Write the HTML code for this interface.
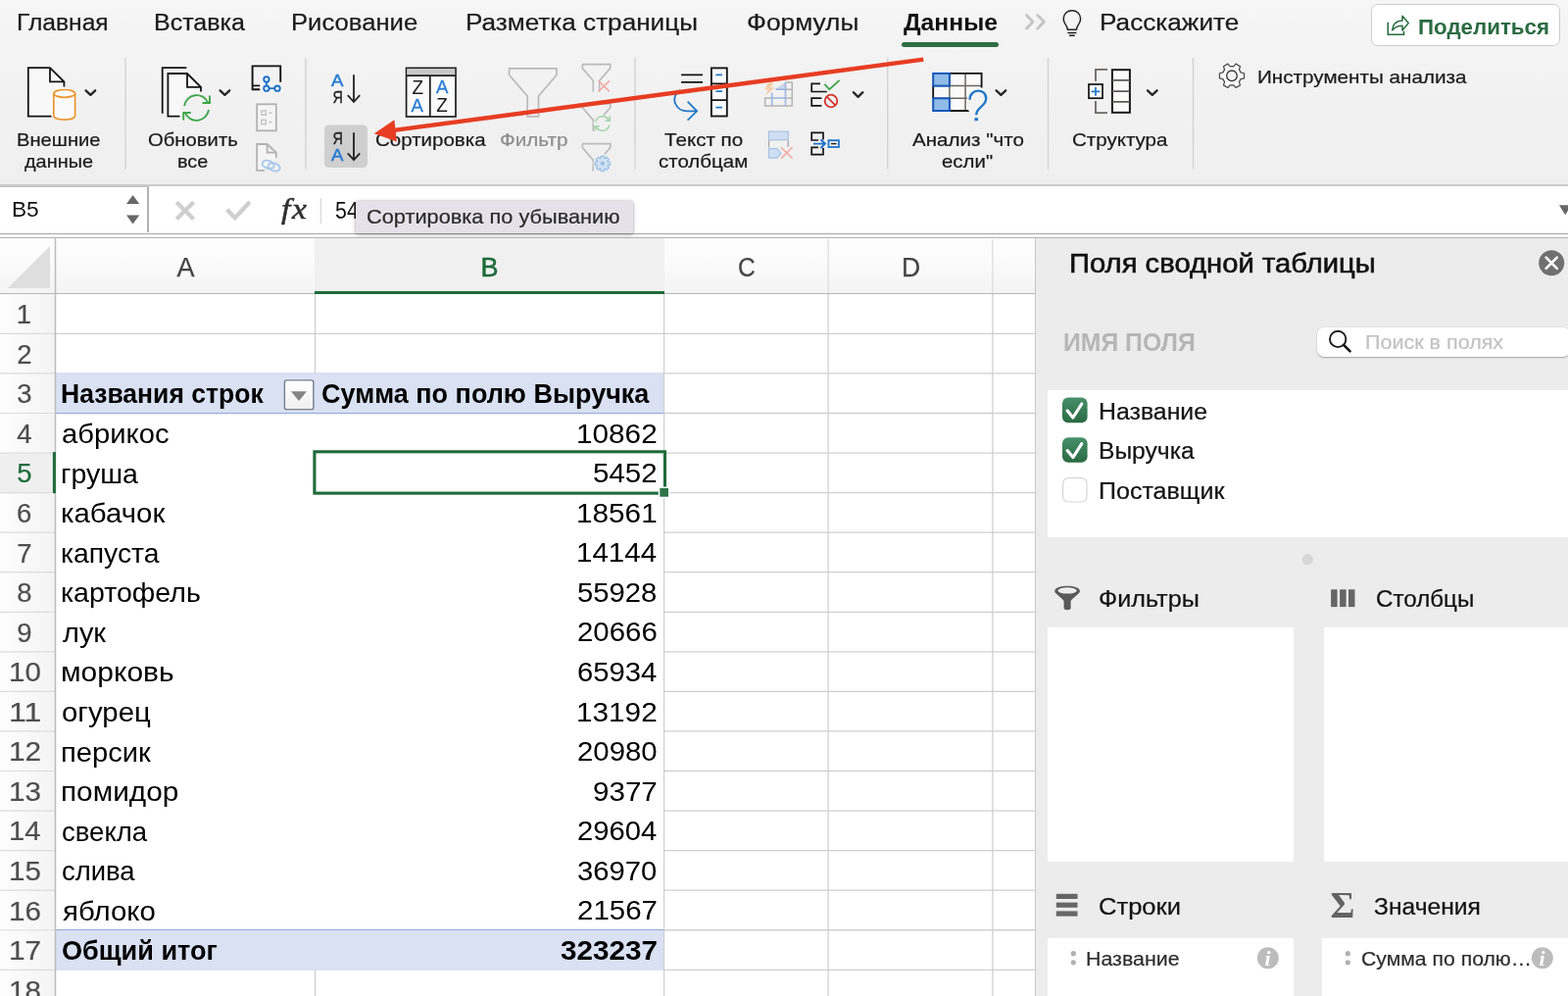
<!DOCTYPE html><html lang="ru"><head><meta charset="utf-8"><title>Excel</title><style>

*{box-sizing:border-box;margin:0;padding:0}
html,body{width:1600px;height:1016px;overflow:hidden;background:#fff}
body{font-family:"Liberation Sans",sans-serif;color:#1a1a1a;position:relative}
.t{position:absolute;white-space:nowrap;display:block;transform-origin:0 0}
.a{position:absolute;display:block}
#w{position:absolute;left:0;top:0;width:1600px;height:1016px;will-change:transform;overflow:hidden}
svg.ov{position:absolute;left:0;top:0;width:1600px;height:1016px;pointer-events:none;overflow:visible}
svg text{font-family:"Liberation Sans",sans-serif}

</style></head><body><div id="w">
<div class="a" style="left:0;top:242px;width:1057px;height:774px;background:#fff;overflow:hidden">
<div class="a" style="left:0;top:0;width:1057px;height:58px;background:linear-gradient(#fcfcfc 0,#fcfcfc 20px,#f4f4f4);border-bottom:1.6px solid #b6b6b6"></div>
<div class="a" style="left:321px;top:1px;width:357px;height:57px;background:#f0f0f0;border-bottom:3.3px solid #1e6b3a"></div>
<div class="a" style="left:0;top:58px;width:56px;height:716px;background:linear-gradient(90deg,#fdfdfd,#f4f4f4)"></div>
<div class="a" style="left:0;top:220.5px;width:56px;height:40.6px;background:#efefef"></div>
<div class="a" style="left:8px;top:9.2px;width:0;height:0;border-left:43.6px solid transparent;border-bottom:43.6px solid #dedede"></div>
<div class="a" style="left:57px;top:138.2px;width:620.6px;height:42px;background:#d9e1f2;border-bottom:1.8px solid #8ea9db"></div>
<div class="a" style="left:57px;top:706.3px;width:620.6px;height:41.4px;background:#d9e1f2;border-top:1.5px solid #8ea9db"></div>
</div>
<svg class="ov" viewBox="0 0 1600 1016"><line x1="0" y1="340.36" x2="56" y2="340.36" stroke="#dcdcdc" stroke-width="1.2"/><line x1="57" y1="340.36" x2="1057" y2="340.36" stroke="#cfcfcf" stroke-width="1.3"/><line x1="0" y1="380.92" x2="56" y2="380.92" stroke="#dcdcdc" stroke-width="1.2"/><line x1="678" y1="380.92" x2="1057" y2="380.92" stroke="#cfcfcf" stroke-width="1.3"/><line x1="0" y1="421.48" x2="56" y2="421.48" stroke="#dcdcdc" stroke-width="1.2"/><line x1="678" y1="421.48" x2="1057" y2="421.48" stroke="#cfcfcf" stroke-width="1.3"/><line x1="0" y1="462.04" x2="56" y2="462.04" stroke="#dcdcdc" stroke-width="1.2"/><line x1="678" y1="462.04" x2="1057" y2="462.04" stroke="#cfcfcf" stroke-width="1.3"/><line x1="0" y1="502.60" x2="56" y2="502.60" stroke="#dcdcdc" stroke-width="1.2"/><line x1="678" y1="502.60" x2="1057" y2="502.60" stroke="#cfcfcf" stroke-width="1.3"/><line x1="0" y1="543.16" x2="56" y2="543.16" stroke="#dcdcdc" stroke-width="1.2"/><line x1="678" y1="543.16" x2="1057" y2="543.16" stroke="#cfcfcf" stroke-width="1.3"/><line x1="0" y1="583.72" x2="56" y2="583.72" stroke="#dcdcdc" stroke-width="1.2"/><line x1="678" y1="583.72" x2="1057" y2="583.72" stroke="#cfcfcf" stroke-width="1.3"/><line x1="0" y1="624.28" x2="56" y2="624.28" stroke="#dcdcdc" stroke-width="1.2"/><line x1="678" y1="624.28" x2="1057" y2="624.28" stroke="#cfcfcf" stroke-width="1.3"/><line x1="0" y1="664.84" x2="56" y2="664.84" stroke="#dcdcdc" stroke-width="1.2"/><line x1="678" y1="664.84" x2="1057" y2="664.84" stroke="#cfcfcf" stroke-width="1.3"/><line x1="0" y1="705.40" x2="56" y2="705.40" stroke="#dcdcdc" stroke-width="1.2"/><line x1="678" y1="705.40" x2="1057" y2="705.40" stroke="#cfcfcf" stroke-width="1.3"/><line x1="0" y1="745.96" x2="56" y2="745.96" stroke="#dcdcdc" stroke-width="1.2"/><line x1="678" y1="745.96" x2="1057" y2="745.96" stroke="#cfcfcf" stroke-width="1.3"/><line x1="0" y1="786.52" x2="56" y2="786.52" stroke="#dcdcdc" stroke-width="1.2"/><line x1="678" y1="786.52" x2="1057" y2="786.52" stroke="#cfcfcf" stroke-width="1.3"/><line x1="0" y1="827.08" x2="56" y2="827.08" stroke="#dcdcdc" stroke-width="1.2"/><line x1="678" y1="827.08" x2="1057" y2="827.08" stroke="#cfcfcf" stroke-width="1.3"/><line x1="0" y1="867.64" x2="56" y2="867.64" stroke="#dcdcdc" stroke-width="1.2"/><line x1="678" y1="867.64" x2="1057" y2="867.64" stroke="#cfcfcf" stroke-width="1.3"/><line x1="0" y1="908.20" x2="56" y2="908.20" stroke="#dcdcdc" stroke-width="1.2"/><line x1="678" y1="908.20" x2="1057" y2="908.20" stroke="#cfcfcf" stroke-width="1.3"/><line x1="0" y1="948.76" x2="56" y2="948.76" stroke="#dcdcdc" stroke-width="1.2"/><line x1="678" y1="948.76" x2="1057" y2="948.76" stroke="#cfcfcf" stroke-width="1.3"/><line x1="0" y1="989.32" x2="56" y2="989.32" stroke="#dcdcdc" stroke-width="1.2"/><line x1="678" y1="989.32" x2="1057" y2="989.32" stroke="#cfcfcf" stroke-width="1.3"/><line x1="56.5" y1="243" x2="56.5" y2="1016" stroke="#bcbcbc" stroke-width="1.5"/><rect x="53.9" y="461.1" width="3" height="42" fill="#1e6b3a"/><line x1="321.5" y1="300" x2="321.5" y2="380.9" stroke="#cfcfcf" stroke-width="1.3"/><line x1="321.5" y1="989.3" x2="321.5" y2="1016" stroke="#cfcfcf" stroke-width="1.3"/><line x1="677.6" y1="300" x2="677.6" y2="1016" stroke="#cfcfcf" stroke-width="1.3"/><line x1="845.1" y1="300" x2="845.1" y2="1016" stroke="#cfcfcf" stroke-width="1.3"/><line x1="1012.9" y1="300" x2="1012.9" y2="1016" stroke="#cfcfcf" stroke-width="1.3"/><line x1="845.1" y1="244" x2="845.1" y2="299" stroke="#dcdcdc" stroke-width="1.2"/><line x1="1012.9" y1="244" x2="1012.9" y2="299" stroke="#dcdcdc" stroke-width="1.2"/><rect x="320.9" y="460.8" width="357.6" height="42.3" fill="none" stroke="#1e6b3a" stroke-width="3.1"/><rect x="671.8" y="496.6" width="11.4" height="11.4" fill="#fff"/><rect x="673.3" y="498" width="8.7" height="8.7" fill="#2d7247"/><defs><linearGradient id="gbtn" x1="0" y1="0" x2="0" y2="1"><stop offset="0" stop-color="#ffffff"/><stop offset="1" stop-color="#f0f0f0"/></linearGradient></defs><rect x="290.4" y="387.9" width="29.5" height="29.7" rx="2.2" fill="url(#gbtn)" stroke="#767d8c" stroke-width="1.4"/><path d="M297 399.3 L313 399.3 L305 409 Z" fill="#848484"/></svg>
<span class="t" style="left:180.52px;top:258px;font-size:27px;line-height:30px;color:#444;-webkit-text-stroke:0.25px #444;">A</span>
<span class="t" style="left:490.62px;top:258px;font-size:27px;line-height:30px;color:#1e6b3a;-webkit-text-stroke:0.5px #1e6b3a;">B</span>
<span class="t" style="left:753.37px;top:258px;font-size:27px;line-height:30px;transform:scaleX(0.9099);color:#444;-webkit-text-stroke:0.25px #444;">C</span>
<span class="t" style="left:919.78px;top:258px;font-size:27px;line-height:30px;transform:scaleX(0.9835);color:#444;-webkit-text-stroke:0.25px #444;">D</span>
<span class="t" style="left:16.79px;top:305px;font-size:27.5px;line-height:31px;color:#4e4e4e;-webkit-text-stroke:0.2px #4e4e4e;">1</span>
<span class="t" style="left:17.13px;top:346px;font-size:27.5px;line-height:31px;color:#4e4e4e;-webkit-text-stroke:0.2px #4e4e4e;">2</span>
<span class="t" style="left:17.24px;top:386px;font-size:27.5px;line-height:31px;color:#4e4e4e;-webkit-text-stroke:0.2px #4e4e4e;">3</span>
<span class="t" style="left:17.24px;top:427px;font-size:27.5px;line-height:31px;color:#4e4e4e;-webkit-text-stroke:0.2px #4e4e4e;">4</span>
<span class="t" style="left:17.17px;top:467px;font-size:27.5px;line-height:31px;color:#1e6b3a;-webkit-text-stroke:0.2px #1e6b3a;">5</span>
<span class="t" style="left:17.07px;top:508px;font-size:27.5px;line-height:31px;color:#4e4e4e;-webkit-text-stroke:0.2px #4e4e4e;">6</span>
<span class="t" style="left:17.13px;top:549px;font-size:27.5px;line-height:31px;color:#4e4e4e;-webkit-text-stroke:0.2px #4e4e4e;">7</span>
<span class="t" style="left:17.13px;top:589px;font-size:27.5px;line-height:31px;color:#4e4e4e;-webkit-text-stroke:0.2px #4e4e4e;">8</span>
<span class="t" style="left:17.17px;top:630px;font-size:27.5px;line-height:31px;color:#4e4e4e;-webkit-text-stroke:0.2px #4e4e4e;">9</span>
<span class="t" style="left:9.19px;top:670px;font-size:27.5px;line-height:31px;transform:scaleX(1.0718);color:#4e4e4e;-webkit-text-stroke:0.2px #4e4e4e;">10</span>
<span class="t" style="left:8.99px;top:711px;font-size:27.5px;line-height:31px;transform:scaleX(1.1684);color:#4e4e4e;-webkit-text-stroke:0.2px #4e4e4e;">11</span>
<span class="t" style="left:9.17px;top:751px;font-size:27.5px;line-height:31px;transform:scaleX(1.0826);color:#4e4e4e;-webkit-text-stroke:0.2px #4e4e4e;">12</span>
<span class="t" style="left:9.18px;top:792px;font-size:27.5px;line-height:31px;transform:scaleX(1.0772);color:#4e4e4e;-webkit-text-stroke:0.2px #4e4e4e;">13</span>
<span class="t" style="left:9.21px;top:832px;font-size:27.5px;line-height:31px;transform:scaleX(1.0611);color:#4e4e4e;-webkit-text-stroke:0.2px #4e4e4e;">14</span>
<span class="t" style="left:9.18px;top:873px;font-size:27.5px;line-height:31px;transform:scaleX(1.0745);color:#4e4e4e;-webkit-text-stroke:0.2px #4e4e4e;">15</span>
<span class="t" style="left:9.18px;top:914px;font-size:27.5px;line-height:31px;transform:scaleX(1.0772);color:#4e4e4e;-webkit-text-stroke:0.2px #4e4e4e;">16</span>
<span class="t" style="left:9.17px;top:954px;font-size:27.5px;line-height:31px;transform:scaleX(1.0826);color:#4e4e4e;-webkit-text-stroke:0.2px #4e4e4e;">17</span>
<span class="t" style="left:9.18px;top:995px;font-size:27.5px;line-height:31px;transform:scaleX(1.0745);color:#4e4e4e;-webkit-text-stroke:0.2px #4e4e4e;">18</span>
<span class="t" style="left:62.76px;top:427px;font-size:28px;line-height:31px;transform:scaleX(1.0433);color:#000;">абрикос</span>
<span class="t" style="left:62.08px;top:468px;font-size:28px;line-height:31px;transform:scaleX(1.0176);color:#000;">груша</span>
<span class="t" style="left:62.09px;top:508px;font-size:28px;line-height:31px;transform:scaleX(1.0498);color:#000;">кабачок</span>
<span class="t" style="left:62.16px;top:549px;font-size:28px;line-height:31px;transform:scaleX(1.0115);color:#000;">капуста</span>
<span class="t" style="left:62.14px;top:589px;font-size:28px;line-height:31px;transform:scaleX(1.0195);color:#000;">картофель</span>
<span class="t" style="left:63.86px;top:630px;font-size:28px;line-height:31px;transform:scaleX(1.0338);color:#000;">лук</span>
<span class="t" style="left:61.98px;top:670px;font-size:28px;line-height:31px;transform:scaleX(1.0702);color:#000;">морковь</span>
<span class="t" style="left:62.83px;top:711px;font-size:28px;line-height:31px;transform:scaleX(1.0482);color:#000;">огурец</span>
<span class="t" style="left:62.03px;top:752px;font-size:28px;line-height:31px;transform:scaleX(1.0411);color:#000;">персик</span>
<span class="t" style="left:61.99px;top:792px;font-size:28px;line-height:31px;transform:scaleX(1.0632);color:#000;">помидор</span>
<span class="t" style="left:62.83px;top:833px;font-size:28px;line-height:31px;transform:scaleX(0.9836);color:#000;">свекла</span>
<span class="t" style="left:62.83px;top:873px;font-size:28px;line-height:31px;transform:scaleX(0.9791);color:#000;">слива</span>
<span class="t" style="left:63.78px;top:914px;font-size:28px;line-height:31px;transform:scaleX(1.0509);color:#000;">яблоко</span>
<span class="t" style="left:62.28px;top:386px;font-size:28px;line-height:31px;transform:scaleX(0.9471);font-weight:700;color:#000;">Названия строк</span>
<span class="t" style="left:328.42px;top:386px;font-size:28px;line-height:31px;transform:scaleX(0.9644);font-weight:700;color:#000;">Сумма по полю Выручка</span>
<span class="t" style="left:62.92px;top:954px;font-size:28px;line-height:31px;transform:scaleX(0.9667);font-weight:700;color:#000;">Общий итог</span>
<span class="t" style="left:588.07px;top:427px;font-size:28px;line-height:31px;transform:scaleX(1.0617);color:#000;">10862</span>
<span class="t" style="left:605.12px;top:467px;font-size:28px;line-height:31px;transform:scaleX(1.0539);color:#000;">5452</span>
<span class="t" style="left:588.07px;top:508px;font-size:28px;line-height:31px;transform:scaleX(1.0617);color:#000;">18561</span>
<span class="t" style="left:588.09px;top:548px;font-size:28px;line-height:31px;transform:scaleX(1.0538);color:#000;">14144</span>
<span class="t" style="left:589.13px;top:589px;font-size:28px;line-height:31px;transform:scaleX(1.0450);color:#000;">55928</span>
<span class="t" style="left:588.83px;top:629px;font-size:28px;line-height:31px;transform:scaleX(1.0498);color:#000;">20666</span>
<span class="t" style="left:588.84px;top:670px;font-size:28px;line-height:31px;transform:scaleX(1.0440);color:#000;">65934</span>
<span class="t" style="left:588.07px;top:711px;font-size:28px;line-height:31px;transform:scaleX(1.0617);color:#000;">13192</span>
<span class="t" style="left:588.83px;top:751px;font-size:28px;line-height:31px;transform:scaleX(1.0479);color:#000;">20980</span>
<span class="t" style="left:604.97px;top:792px;font-size:28px;line-height:31px;transform:scaleX(1.0563);color:#000;">9377</span>
<span class="t" style="left:588.84px;top:832px;font-size:28px;line-height:31px;transform:scaleX(1.0440);color:#000;">29604</span>
<span class="t" style="left:589.20px;top:873px;font-size:28px;line-height:31px;transform:scaleX(1.0430);color:#000;">36970</span>
<span class="t" style="left:588.83px;top:913px;font-size:28px;line-height:31px;transform:scaleX(1.0518);color:#000;">21567</span>
<span class="t" style="left:571.63px;top:954px;font-size:28px;line-height:31px;transform:scaleX(1.0594);font-weight:700;color:#000;">323237</span>
<div class="a" style="left:1056px;top:242px;width:544px;height:774px;background:#ececec;border-left:1.5px solid #c6c6c6"></div>
<div class="a" style="left:1068.7px;top:398px;width:531.3px;height:149.5px;background:#fff;"></div>
<div class="a" style="left:1068.7px;top:639.7px;width:251.5px;height:239.6px;background:#fff;"></div>
<div class="a" style="left:1350.7px;top:639.7px;width:249.3px;height:239.6px;background:#fff;"></div>
<div class="a" style="left:1068.7px;top:957.3px;width:251.5px;height:60px;background:#fff;"></div>
<div class="a" style="left:1348.8px;top:957.3px;width:251.2px;height:60px;background:#fff;"></div>
<div class="a" style="left:1343.5px;top:334px;width:258px;height:30px;background:#fff;border-radius:7px;box-shadow:0 1px 1.5px rgba(0,0,0,.28),0 0 0 0.5px rgba(0,0,0,.06)"></div>
<span class="t" style="left:1091.46px;top:254px;font-size:27px;line-height:30px;transform:scaleX(1.0825);color:#111;-webkit-text-stroke:0.6px #111;">Поля сводной таблицы</span>
<span class="t" style="left:1084.69px;top:335px;font-size:25px;line-height:28px;transform:scaleX(0.9906);font-weight:700;color:#b6b6b6;">ИМЯ ПОЛЯ</span>
<span class="t" style="left:1392.58px;top:338px;font-size:19.5px;line-height:22px;transform:scaleX(1.1033);color:#c2c2c2;-webkit-text-stroke:0.22px #c2c2c2;">Поиск в полях</span>
<span class="t" style="left:1120.71px;top:407px;font-size:23.5px;line-height:26px;transform:scaleX(1.0577);color:#111;-webkit-text-stroke:0.22px #111;">Название</span>
<span class="t" style="left:1120.73px;top:447px;font-size:23.5px;line-height:26px;transform:scaleX(1.0475);color:#111;-webkit-text-stroke:0.22px #111;">Выручка</span>
<span class="t" style="left:1120.70px;top:488px;font-size:23.5px;line-height:26px;transform:scaleX(1.0654);color:#111;-webkit-text-stroke:0.22px #111;">Поставщик</span>
<span class="t" style="left:1121.25px;top:598px;font-size:23.5px;line-height:26px;transform:scaleX(1.0723);color:#111;-webkit-text-stroke:0.22px #111;">Фильтры</span>
<span class="t" style="left:1404.09px;top:598px;font-size:23.5px;line-height:26px;transform:scaleX(1.0278);color:#111;-webkit-text-stroke:0.22px #111;">Столбцы</span>
<span class="t" style="left:1121.42px;top:912px;font-size:23.5px;line-height:26px;transform:scaleX(1.0873);color:#111;-webkit-text-stroke:0.22px #111;">Строки</span>
<span class="t" style="left:1402.10px;top:912px;font-size:23.5px;line-height:26px;transform:scaleX(1.0487);color:#111;-webkit-text-stroke:0.22px #111;">Значения</span>
<span class="t" style="left:1108.19px;top:967px;font-size:20px;line-height:22px;transform:scaleX(1.0702);color:#2c2c2c;-webkit-text-stroke:0.2px #2c2c2c;">Название</span>
<span class="t" style="left:1388.54px;top:967px;font-size:20px;line-height:22px;transform:scaleX(1.0599);color:#2c2c2c;-webkit-text-stroke:0.2px #2c2c2c;">Сумма по полю…</span>
<svg class="ov" viewBox="0 0 1600 1016"><defs><linearGradient id="gck" x1="0" y1="0" x2="0" y2="1"><stop offset="0" stop-color="#46906a"/><stop offset="1" stop-color="#2a6a43"/></linearGradient></defs><circle cx="1583.2" cy="268.2" r="13" fill="#707070"/><path d="M1577.6 262.6 L1588.8 273.8 M1588.8 262.6 L1577.6 273.8" stroke="#fff" stroke-width="2.6" stroke-linecap="round"/><circle cx="1365.2" cy="345.9" r="8.2" fill="none" stroke="#1a1a1a" stroke-width="1.9"/><path d="M1371.2 352 L1377.6 358.4" stroke="#1a1a1a" stroke-width="2.6" stroke-linecap="round"/><rect x="1084" y="405.6" width="25.6" height="25.6" rx="6" fill="url(#gck)"/><path d="M1089.2 419.0 L1094.9 426.0 L1103.8 412.0" fill="none" stroke="#fff" stroke-width="3.1" stroke-linecap="round" stroke-linejoin="round"/><rect x="1084" y="446.2" width="25.6" height="25.6" rx="6" fill="url(#gck)"/><path d="M1089.2 459.59999999999997 L1094.9 466.59999999999997 L1103.8 452.59999999999997" fill="none" stroke="#fff" stroke-width="3.1" stroke-linecap="round" stroke-linejoin="round"/><rect x="1084.6" y="487.6" width="24.4" height="24.4" rx="5.5" fill="#fff" stroke="#d6d6d6" stroke-width="1.2"/><circle cx="1334.3" cy="570.7" r="5.6" fill="#d6d6d6"/><path d="M1076.2 602.9 C1076.2 595.9 1102 595.9 1102 602.9 C1102 605.9 1093 610.4 1092.6 613.4 L1092.6 620.3 C1092.6 622.8 1085.6 622.8 1085.6 620.3 L1085.6 613.4 C1085.2 610.4 1076.2 605.9 1076.2 602.9 Z" fill="#5a5a5a"/><ellipse cx="1089.1" cy="602.4" rx="9.6" ry="3.2" fill="#ececec"/><rect x="1358.1" y="601.3" width="6.5" height="17.8" fill="#666"/><rect x="1367.1" y="601.3" width="6.5" height="17.8" fill="#666"/><rect x="1376" y="601.3" width="6.5" height="17.8" fill="#666"/><rect x="1077.8" y="911.8" width="21.7" height="5.2" fill="#666"/><rect x="1077.8" y="920.6" width="21.7" height="5.2" fill="#666"/><rect x="1077.8" y="929.4" width="21.7" height="5.2" fill="#666"/><text x="1357.4" y="935.6" style="font-family:'Liberation Serif',serif" font-weight="bold" font-size="38" fill="#646464">Σ</text><circle cx="1095.3" cy="972.7" r="2.6" fill="#b0b0b0"/><circle cx="1095.3" cy="981.8" r="2.6" fill="#b0b0b0"/><circle cx="1375.3" cy="972.7" r="2.6" fill="#b0b0b0"/><circle cx="1375.3" cy="981.8" r="2.6" fill="#b0b0b0"/><circle cx="1293.8" cy="977.3" r="11" fill="#bcbcbc"/><text x="1290.3999999999999" y="984.6" style="font-family:'Liberation Serif',serif" font-style="italic" font-weight="bold" font-size="22" fill="#fff">i</text><circle cx="1573.8" cy="977.3" r="11" fill="#bcbcbc"/><text x="1570.3999999999999" y="984.6" style="font-family:'Liberation Serif',serif" font-style="italic" font-weight="bold" font-size="22" fill="#fff">i</text></svg>
<div class="a" style="left:0;top:0;width:1600px;height:189px;background:linear-gradient(#f6f6f6 0,#f3f3f3 50px,#efefef 189px)"></div>
<div class="a" style="left:0;top:188px;width:1600px;height:2px;background:#c9c9c9"></div>
<div class="a" style="left:0;top:190px;width:1600px;height:48px;background:#fff"></div>
<div class="a" style="left:0;top:190px;width:152px;height:47px;border-top:1.5px solid #c4c4c4;border-right:2px solid #b2b2b2;background:#fff"></div>
<div class="a" style="left:0;top:237.9px;width:1600px;height:1.7px;background:#a8a8a8"></div>
<div class="a" style="left:0;top:239.2px;width:1600px;height:2.6px;background:#f6f6f6"></div>
<div class="a" style="left:0;top:241.7px;width:1600px;height:1.4px;background:#b4b4b4"></div>
<div class="a" style="left:1399.4px;top:4.3px;width:192.8px;height:43px;background:#fff;border:1.5px solid #cdcdcd;border-radius:7px"></div>
<div class="a" style="left:920px;top:42.6px;width:98.5px;height:5.2px;border-radius:3px;background:#2f6f45"></div>
<span class="t" style="left:16.83px;top:10px;font-size:23px;line-height:26px;transform:scaleX(1.0699);-webkit-text-stroke:0.22px #1a1a1a;">Главная</span>
<span class="t" style="left:157.30px;top:10px;font-size:23px;line-height:26px;transform:scaleX(1.0877);-webkit-text-stroke:0.22px #1a1a1a;">Вставка</span>
<span class="t" style="left:297.25px;top:10px;font-size:23px;line-height:26px;transform:scaleX(1.1152);-webkit-text-stroke:0.22px #1a1a1a;">Рисование</span>
<span class="t" style="left:475.21px;top:10px;font-size:23px;line-height:26px;transform:scaleX(1.1354);-webkit-text-stroke:0.22px #1a1a1a;">Разметка страницы</span>
<span class="t" style="left:761.79px;top:10px;font-size:23px;line-height:26px;transform:scaleX(1.1423);-webkit-text-stroke:0.22px #1a1a1a;">Формулы</span>
<span class="t" style="left:922.11px;top:10px;font-size:23px;line-height:26px;transform:scaleX(1.0742);font-weight:700;color:#111;">Данные</span>
<span class="t" style="left:1121.51px;top:10px;font-size:23px;line-height:26px;transform:scaleX(1.1376);-webkit-text-stroke:0.22px #1a1a1a;">Расскажите</span>
<span class="t" style="left:1447.35px;top:15px;font-size:22px;line-height:25px;transform:scaleX(1.0148);font-weight:700;color:#2a6b42;">Поделиться</span>
<span class="t" style="left:17.19px;top:132px;font-size:18.5px;line-height:21px;transform:scaleX(1.0890);-webkit-text-stroke:0.22px #1a1a1a;">Внешние</span>
<span class="t" style="left:25.15px;top:154px;font-size:18.5px;line-height:21px;transform:scaleX(1.0756);-webkit-text-stroke:0.22px #1a1a1a;">данные</span>
<span class="t" style="left:151.39px;top:132px;font-size:18.5px;line-height:21px;transform:scaleX(1.0951);-webkit-text-stroke:0.22px #1a1a1a;">Обновить</span>
<span class="t" style="left:180.96px;top:154px;font-size:18.5px;line-height:21px;transform:scaleX(1.0700);-webkit-text-stroke:0.22px #1a1a1a;">все</span>
<span class="t" style="left:383.27px;top:132px;font-size:18.5px;line-height:21px;transform:scaleX(1.1089);-webkit-text-stroke:0.22px #1a1a1a;">Сортировка</span>
<span class="t" style="left:510.11px;top:132px;font-size:18.5px;line-height:21px;transform:scaleX(1.1176);color:#8c8c8c;-webkit-text-stroke:0.22px #8c8c8c;">Фильтр</span>
<span class="t" style="left:677.89px;top:132px;font-size:18.5px;line-height:21px;transform:scaleX(1.1142);-webkit-text-stroke:0.22px #1a1a1a;">Текст по</span>
<span class="t" style="left:672.43px;top:154px;font-size:18.5px;line-height:21px;transform:scaleX(1.1072);-webkit-text-stroke:0.22px #1a1a1a;">столбцам</span>
<span class="t" style="left:931.30px;top:132px;font-size:18.5px;line-height:21px;transform:scaleX(1.1121);-webkit-text-stroke:0.22px #1a1a1a;">Анализ "что</span>
<span class="t" style="left:961.43px;top:154px;font-size:18.5px;line-height:21px;transform:scaleX(1.1041);-webkit-text-stroke:0.22px #1a1a1a;">если"</span>
<span class="t" style="left:1094.27px;top:132px;font-size:18.5px;line-height:21px;transform:scaleX(1.1099);-webkit-text-stroke:0.22px #1a1a1a;">Структура</span>
<span class="t" style="left:1283.35px;top:68px;font-size:18.5px;line-height:21px;transform:scaleX(1.1164);-webkit-text-stroke:0.22px #1a1a1a;">Инструменты анализа</span>
<span class="t" style="left:12.49px;top:201px;font-size:22.3px;line-height:25px;transform:scaleX(1.0168);color:#111;">B5</span>
<span class="t" style="left:341.94px;top:202px;font-size:23.6px;line-height:26px;transform:scaleX(0.9064);color:#111;">54</span>
<span class="t" style="left:287.4px;top:196.5px;letter-spacing:1.5px;font-family:'Liberation Serif',serif;font-style:italic;font-size:29px;line-height:32px;color:#2e2e2e;-webkit-text-stroke:0.45px #2e2e2e;transform:scaleX(1.16)">fx</span>
<svg class="ov" viewBox="0 0 1600 1016"><line x1="128" y1="59" x2="128" y2="172.5" stroke="#d3d3d3" stroke-width="1.4"/><line x1="312" y1="59" x2="312" y2="172.5" stroke="#d3d3d3" stroke-width="1.4"/><line x1="648" y1="59" x2="648" y2="172.5" stroke="#d3d3d3" stroke-width="1.4"/><line x1="905.7" y1="59" x2="905.7" y2="172.5" stroke="#d3d3d3" stroke-width="1.4"/><line x1="1069.5" y1="59" x2="1069.5" y2="172.5" stroke="#d3d3d3" stroke-width="1.4"/><line x1="1217.5" y1="59" x2="1217.5" y2="172.5" stroke="#d3d3d3" stroke-width="1.4"/><path d="M1047.5 15.5 L1054 22.2 L1047.5 29 M1058.8 15.5 L1065.3 22.2 L1058.8 29" fill="none" stroke="#c6c6c6" stroke-width="3" stroke-linecap="round" stroke-linejoin="round"/><path d="M1089.3 30.2 C1089.3 25.5 1085.2 24.5 1085.2 19.2 C1085.2 14 1089.2 10.8 1093.9 10.8 C1098.6 10.8 1102.6 14 1102.6 19.2 C1102.6 24.5 1098.5 25.5 1098.5 30.2 Z M1089.3 30.2 L1098.5 30.2 M1090 33.4 L1097.8 33.4 M1091.6 36.3 L1096.2 36.3" fill="none" stroke="#222" stroke-width="1.5" stroke-linejoin="round" stroke-linecap="round"/><path d="M1416.3 22.8 V35.3 H1432.5 V31.8" fill="none" stroke="#2a6b42" stroke-width="1.6"/><path d="M1420.7 30.8 C1421 24.6 1425 21.3 1431 21 L1431 16.2 L1437.2 23.6 L1431 31 L1431 26.2 C1426.6 26.2 1423.1 27.6 1420.7 30.8 Z" fill="none" stroke="#2a6b42" stroke-width="1.5" stroke-linejoin="round"/><path d="M1265.98 73.92 L1269.54 74.76 L1269.54 79.84 L1265.98 80.68 A9.6 9.6 0 0 1 1264.42 83.39 L1264.42 83.39 L1265.47 86.89 L1261.07 89.44 L1258.56 86.77 A9.6 9.6 0 0 1 1255.44 86.77 L1255.44 86.77 L1252.93 89.44 L1248.53 86.89 L1249.58 83.39 A9.6 9.6 0 0 1 1248.02 80.68 L1248.02 80.68 L1244.46 79.84 L1244.46 74.76 L1248.02 73.92 A9.6 9.6 0 0 1 1249.58 71.21 L1249.58 71.21 L1248.53 67.71 L1252.93 65.16 L1255.44 67.83 A9.6 9.6 0 0 1 1258.56 67.83 L1258.56 67.83 L1261.07 65.16 L1265.47 67.71 L1264.42 71.21 A9.6 9.6 0 0 1 1265.98 73.92 Z" fill="#fafafa" stroke="#484848" stroke-width="1.25" stroke-linejoin="round"/><circle cx="1257" cy="77.3" r="5.3" fill="#f3f3f3" stroke="#333" stroke-width="1.3"/><path d="M28.8 69.2 H51 L65.4 83.4 V118.7 H28.8 Z" fill="#f8f8f8"/><path d="M52.5 118.7 H28.8 V69.2 H51 L65.4 83.4 V88.4 M51 69.2 V83.4 H65.4" fill="none" stroke="#141414" stroke-width="1.8" stroke-linejoin="miter"/><path d="M54.8 95.4 V118 C54.8 123.4 76.6 123.4 76.6 118 V95.4" fill="#fafafa" stroke="#ec962e" stroke-width="1.7"/><ellipse cx="65.7" cy="95.4" rx="10.9" ry="3.9" fill="#fafafa" stroke="#ec962e" stroke-width="1.7"/><path d="M87.6 92.3 L92.39999999999999 96.89999999999999 L97.19999999999999 92.3" fill="none" stroke="#262626" stroke-width="2.3" stroke-linecap="round" stroke-linejoin="round"/><path d="M190.4 69.2 H165.7 V115.8" fill="none" stroke="#141414" stroke-width="1.8"/><path d="M171.4 75 H191 L205 88.8 V118.7 H171.4 Z" fill="#f8f8f8"/><path d="M183.5 118.7 H171.4 V75 H191 L205 88.8 V93.5 M191 75 V88.8 H205" fill="none" stroke="#141414" stroke-width="1.8"/><circle cx="200.6" cy="110" r="15.5" fill="#f1f1f1"/><path d="M188.2 108 A12.6 12.6 0 0 1 212.2 104.6 M213 112 A12.6 12.6 0 0 1 189 115.4" fill="none" stroke="#3fa64a" stroke-width="1.9"/><path d="M214 97.5 V105 H206.5 M187.2 122.5 V115 H194.7" fill="none" stroke="#3fa64a" stroke-width="1.9"/><path d="M224.6 92.3 L229.4 96.89999999999999 L234.2 92.3" fill="none" stroke="#262626" stroke-width="2.3" stroke-linecap="round" stroke-linejoin="round"/><path d="M265.2 91.3 H257.6 V67.4 H286.2 V83.8" fill="none" stroke="#111" stroke-width="1.9"/><path d="M257.6 87.4 H265.2" stroke="#111" stroke-width="1.7"/><path d="M271.9 84 V87.4 M275 90.2 H280" stroke="#1e72c8" stroke-width="1.8" fill="none"/><circle cx="271.9" cy="81" r="2.7" fill="#f4f4f4" stroke="#1e72c8" stroke-width="1.9"/><circle cx="271.9" cy="90.2" r="2.7" fill="#f4f4f4" stroke="#1e72c8" stroke-width="1.9"/><circle cx="283" cy="90.2" r="2.7" fill="#f4f4f4" stroke="#1e72c8" stroke-width="1.9"/><rect x="262.2" y="106.3" width="19.6" height="27" fill="#f5f5f5" stroke="#b2b2b2" stroke-width="1.8"/><rect x="266.9" y="112.9" width="4.4" height="4.4" fill="none" stroke="#c0c0c0" stroke-width="1.3"/><rect x="266.9" y="122.3" width="4.4" height="4.4" fill="none" stroke="#c0c0c0" stroke-width="1.3"/><path d="M274.4 115.1 H277.6 M274.4 124.5 H277.6" stroke="#c0c0c0" stroke-width="1.4"/><path d="M270 173.8 H262.2 V147 H272.6 L281.8 155.6 V161 M272.6 147 V155.6 H281.8" fill="#f5f5f5" stroke="#b2b2b2" stroke-width="1.8" stroke-linejoin="miter"/><ellipse cx="273.6" cy="167.8" rx="6.2" ry="3.9" transform="rotate(18 273.6 167.8)" fill="none" stroke="#a9c9e9" stroke-width="1.9"/><ellipse cx="279.6" cy="170.4" rx="6.2" ry="3.9" transform="rotate(18 279.6 170.4)" fill="none" stroke="#a9c9e9" stroke-width="1.9"/><text x="338.1" y="88.2" font-size="17.4" fill="#2b7cd3" stroke="#2b7cd3" stroke-width="0.55" textLength="12.4" lengthAdjust="spacingAndGlyphs">А</text><text x="339.6" y="104.7" font-size="16" fill="#1c1c1c" stroke="#1c1c1c" stroke-width="0.3" textLength="10.4" lengthAdjust="spacingAndGlyphs">Я</text><path d="M361 76.2 V103.6 M354.8 97.2 L361 104 L367.2 97.2" fill="none" stroke="#222" stroke-width="1.8" stroke-linejoin="miter"/><rect x="331" y="127.4" width="44" height="43.6" rx="4.5" fill="#cfcfcf"/><text x="339.6" y="147.2" font-size="16" fill="#1c1c1c" stroke="#1c1c1c" stroke-width="0.3" textLength="10.4" lengthAdjust="spacingAndGlyphs">Я</text><text x="338.1" y="163.8" font-size="17.4" fill="#2b7cd3" stroke="#2b7cd3" stroke-width="0.55" textLength="12.4" lengthAdjust="spacingAndGlyphs">А</text><path d="M361 135.2 V162.8 M354.8 156.4 L361 163.2 L367.2 156.4" fill="none" stroke="#222" stroke-width="1.8"/><rect x="414.6" y="69.4" width="50.4" height="49.6" fill="#fbfbfb" stroke="#1c1c1c" stroke-width="1.7"/><rect x="415.4" y="70.2" width="48.8" height="6.2" fill="#c8c8c8"/><path d="M414.6 77.2 H465 M438.8 77.2 V119" stroke="#1c1c1c" stroke-width="1.7"/><text x="420.6" y="95.6" font-size="19.8" fill="#1c1c1c" textLength="11.6" lengthAdjust="spacingAndGlyphs">Z</text><text x="419.5" y="113.9" font-size="19" fill="#2b7cd3" stroke="#2b7cd3" stroke-width="0.3" textLength="12.4" lengthAdjust="spacingAndGlyphs">А</text><text x="445.1" y="95.4" font-size="19" fill="#2b7cd3" stroke="#2b7cd3" stroke-width="0.3" textLength="12.4" lengthAdjust="spacingAndGlyphs">А</text><text x="445.2" y="114" font-size="19.8" fill="#1c1c1c" textLength="11.6" lengthAdjust="spacingAndGlyphs">Z</text><path d="M519.6 69.8 H568 V76.5 L549.5 98 V118.8 H538.2 V98 L519.6 76.5 Z" fill="none" stroke="#b9b9b9" stroke-width="1.7" stroke-linejoin="miter"/><path d="M594.3 65.6 H622.6999999999999 V69.6 L611.6999999999999 82.19999999999999 V93.6 M605.3 93.6 V82.19999999999999 L594.3 69.6 V65.6" fill="none" stroke="#b9b9b9" stroke-width="1.6"/><path d="M610.6 82.4 L622 93.4 M622 82.4 L610.6 93.4" stroke="#f2a9a3" stroke-width="1.5"/><path d="M594.3 105.8 H622.6999999999999 V109.8 L611.6999999999999 122.4 V133.8 M605.3 133.8 V122.4 L594.3 109.8 V105.8" fill="none" stroke="#b9b9b9" stroke-width="1.6"/><circle cx="614.6" cy="126" r="9" fill="#f1f1f1"/><path d="M607.6 124.6 A7.2 7.2 0 0 1 621.2 122.8 M621.8 127.4 A7.2 7.2 0 0 1 608.2 129.2" fill="none" stroke="#a5d5aa" stroke-width="1.6"/><path d="M622.2 118.6 V123.2 H617.6 M607.2 133.4 V128.8 H611.8" fill="none" stroke="#a5d5aa" stroke-width="1.6"/><path d="M594.3 146.6 H622.6999999999999 V150.6 L611.6999999999999 163.2 V174.6 M605.3 174.6 V163.2 L594.3 150.6 V146.6" fill="none" stroke="#b9b9b9" stroke-width="1.6"/><circle cx="614.8" cy="166.6" r="9.5" fill="#f1f1f1"/><path d="M612.83 161.56 L613.25 159.16 L616.35 159.16 L616.77 161.56 L617.11 161.70 L619.11 160.30 L621.30 162.49 L619.90 164.49 L620.04 164.83 L622.44 165.25 L622.44 168.35 L620.04 168.77 L619.90 169.11 L621.30 171.11 L619.11 173.30 L617.11 171.90 L616.77 172.04 L616.35 174.44 L613.25 174.44 L612.83 172.04 L612.49 171.90 L610.49 173.30 L608.30 171.11 L609.70 169.11 L609.56 168.77 L607.16 168.35 L607.16 165.25 L609.56 164.83 L609.70 164.49 L608.30 162.49 L610.49 160.30 L612.49 161.70 Z" fill="#d3e3f5" stroke="#a5c4e6" stroke-width="1.5" stroke-linejoin="round"/><circle cx="614.8" cy="166.8" r="2.2" fill="#9fc0e4"/><path d="M695.1 76.4 H717 M695.1 83.8 H717" stroke="#141414" stroke-width="1.7"/><path d="M693.6 92 C688.6 95 686.8 101.8 689.6 106.6 C691.8 110.8 696 113.3 701 113.3 L710.4 113.3 M701.6 103.7 L711.2 113.3 L701.6 122.7" fill="none" stroke="#2478c8" stroke-width="1.8"/><rect x="725.9" y="69.4" width="15.9" height="49.1" fill="#fafafa" stroke="#141414" stroke-width="1.85"/><path d="M725.9 85.3 H741.8 M725.9 102.2 H741.8" stroke="#141414" stroke-width="1.8"/><path d="M730.4 76.4 H737 M730.4 93.2 H737 M730.4 109.6 H737" stroke="#2478c8" stroke-width="1.7"/><path d="M801.5 83.9 H808.3 V107.9 H780.6 V100 H787.7 M801.5 91.3 H808.3 M801.5 100 H808.3" fill="none" stroke="#b4b4b4" stroke-width="1.5"/><path d="M790.5 91.3 L801.5 83.9 V91.3 Z" fill="#c9d8ee"/><path d="M787.7 107.9 V94.5 M801.5 83.9 V107.9 M787.7 100 H801.5 M791.5 91.3 H801.5" fill="none" stroke="#9db5de" stroke-width="1.6"/><path d="M783.6 84.2 L789.6 84.2 L786.4 89.2 L791 89.2 L780.8 97.6 L783.8 91.6 L780.4 91.6 Z" fill="#f5cfae"/><path d="M837 85.4 H828.2 V93.5 H843.8 M838.4 100.1 H828.2 V107.8 H838.4" fill="none" stroke="#141414" stroke-width="1.7"/><path d="M841.4 85.8 L846.3 91.2 L856.6 81.8" fill="none" stroke="#3fa64a" stroke-width="1.8"/><circle cx="848" cy="103" r="6.3" fill="#f3f3f3" stroke="#d5342a" stroke-width="1.8"/><path d="M843.6 98.6 L852.4 107.4" stroke="#d5342a" stroke-width="1.8"/><path d="M870.8 94.2 L875.5999999999999 98.8 L880.4 94.2" fill="none" stroke="#262626" stroke-width="2.3" stroke-linecap="round" stroke-linejoin="round"/><rect x="784.4" y="134.1" width="20" height="8.6" fill="#cfdef2" stroke="#aac3e6" stroke-width="1.2"/><path d="M784.6 143.3 V150.6 M804.2 143.3 V150" stroke="#a6a6a6" stroke-width="1.3"/><path d="M784.4 151.6 H793 L797 156.4 L793 161.2 H784.4 Z" fill="#cfdef2" stroke="#aac3e6" stroke-width="1.2"/><path d="M797 150.2 L808.6 161.6 M808.6 150.2 L797 161.6" stroke="#f2aaa3" stroke-width="1.5"/><path d="M835 143 H828.2 V135.3 H840 V142.6 M835 150.3 H828.2 V157.6 H840 V150.8" fill="none" stroke="#141414" stroke-width="1.7"/><path d="M830 146.6 H841.6 M837.4 142.2 L842 146.6 L837.4 151" fill="none" stroke="#1e72c8" stroke-width="1.9"/><rect x="845.5" y="143.2" width="10.4" height="6.8" fill="#f3f3f3" stroke="#1e72c8" stroke-width="1.8"/><path d="M848 146.6 H853.6" stroke="#222" stroke-width="1.5"/><rect x="952.2" y="74.9" width="49.4" height="38.1" fill="#fafafa"/><path d="M968.9 74.9 V113 M985.1 74.9 V113 M952.2 87.6 H1001.6 M952.2 100.3 H992" stroke="#6a6662" stroke-width="1.5"/><path d="M968.9 74.9 H1001.6 V89.6 M968.9 113 H992 M952.2 87.6 V100.3" fill="none" stroke="#111" stroke-width="1.8"/><rect x="952.2" y="74.9" width="16.7" height="12.7" fill="#92bce8" stroke="#1458bb" stroke-width="2"/><rect x="952.2" y="100.3" width="16.7" height="12.7" fill="#92bce8" stroke="#1458bb" stroke-width="2"/><path d="M987 103 C985.5 88.5 1009.5 88.5 1009 101.5 C1008.6 110 998.6 110.5 998.4 119 L994 124 L987 110 Z" fill="#f3f3f3"/><path d="M989.6 101.8 C989.4 90 1006.2 89.6 1006.2 100.4 C1006.2 108.6 996.2 109 996.2 117.2" fill="none" stroke="#2478c8" stroke-width="2.4"/><rect x="994.4" y="120.2" width="3.6" height="3" fill="#2478c8"/><path d="M1016.6 92.3 L1021.4 96.89999999999999 L1026.2 92.3" fill="none" stroke="#262626" stroke-width="2.3" stroke-linecap="round" stroke-linejoin="round"/><path d="M1130 70.9 H1118 V82.8 M1118 103 V115.1 H1130" fill="none" stroke="#6a6662" stroke-width="1.8"/><rect x="1111" y="86" width="14" height="14.2" fill="#fafafa" stroke="#111" stroke-width="1.7"/><path d="M1113.6 93.3 H1122.4 M1118 88.9 V97.7" stroke="#2478c8" stroke-width="1.8"/><rect x="1134.9" y="71.2" width="18" height="43.6" fill="#fafafa" stroke="#1a1a1a" stroke-width="2"/><path d="M1134.9 81.9 H1152.9 M1134.9 93.1 H1152.9 M1134.9 103.9 H1152.9" stroke="#5e5a56" stroke-width="1.6"/><path d="M1171 92.3 L1175.8 96.89999999999999 L1180.6 92.3" fill="none" stroke="#262626" stroke-width="2.3" stroke-linecap="round" stroke-linejoin="round"/><path d="M129 208 L135.6 199 L142.2 208 Z M129 219.4 L135.6 228.4 L142.2 219.4 Z" fill="#676767"/><path d="M180.2 206.2 L197.6 223.6 M197.6 206.2 L180.2 223.6" stroke="#cecece" stroke-width="4.2" stroke-linecap="butt"/><path d="M231.6 213.8 L239.8 222.2 L254.9 206" fill="none" stroke="#cecece" stroke-width="4.2" stroke-linecap="butt" stroke-linejoin="miter"/><line x1="327.4" y1="202" x2="327.4" y2="228" stroke="#dadada" stroke-width="1.4"/><path d="M1591 209.3 L1603.4 209.3 L1597.2 219.2 Z" fill="#666"/></svg>
<div class="a" style="left:362.5px;top:204.5px;width:283px;height:33px;background:#e4e2e8;border-radius:2px;box-shadow:0 1px 4px rgba(0,0,0,.3),0 0 0 .5px rgba(0,0,0,.1)"></div>
<span class="t" style="left:373.91px;top:210px;font-size:20.2px;line-height:22px;transform:scaleX(1.0780);color:#2a2a2a;-webkit-text-stroke:0.2px #2a2a2a;">Сортировка по убыванию</span>
<svg class="ov" viewBox="0 0 1600 1016"><path d="M942.3 60.7 L402 132.9" stroke="#e73d23" stroke-width="4.3" fill="none"/><path d="M381.8 136.2 L402.4 122.2 L404.9 144.4 Z" fill="#e73d23"/></svg>
</div></body></html>
